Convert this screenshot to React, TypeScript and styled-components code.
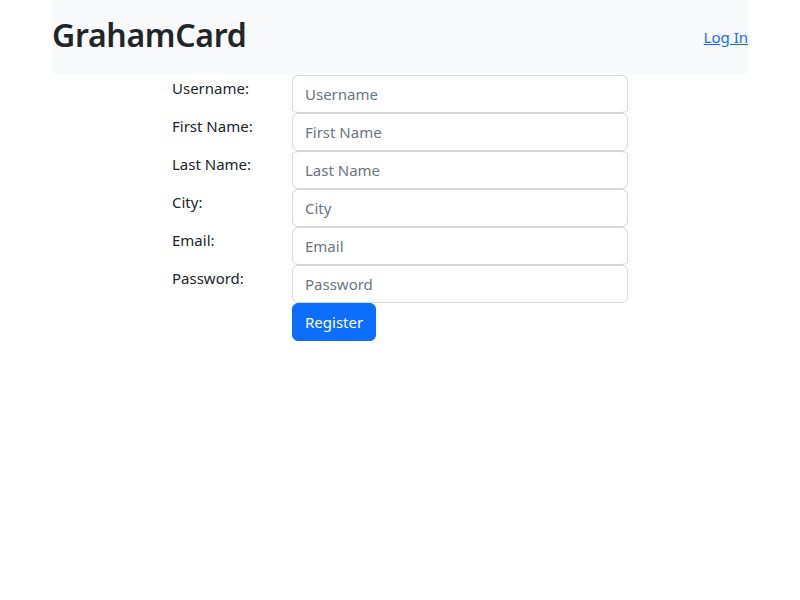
import React from "react";
import styled, { createGlobalStyle } from "styled-components";

const Global = createGlobalStyle`
  * { box-sizing: border-box; }
  body {
    margin: 0;
    background: #fff;
    color: #212529;
    font-family: "Noto Sans", "Open Sans", sans-serif;
    font-size: 16px;
    line-height: 1.5;
  }
`;

const Container = styled.div`
  width: 696px;
  margin: 0 auto;
`;

const Header = styled.header`
  height: 74px;
  background: #f8f9fa;
  display: flex;
  align-items: center;
  justify-content: space-between;
`;

const Brand = styled.h1`
  margin: 0 0 3px;
  font-size: 32px;
  font-weight: 600;
  line-height: 1.2;
  color: #212529;
  letter-spacing: -0.3px;
`;

const NavLink = styled.a`
  color: #0d6efd;
  text-decoration: underline;
  font-size: 15px;
  margin-top: 1px;
`;

const Form = styled.form`
  width: 456px;
  margin: 1px auto 0;
  display: grid;
  grid-template-columns: 120px 336px;
`;

const Label = styled.label`
  padding-top: 1px;
  font-size: 15px;
  line-height: 24px;
`;

const Input = styled.input`
  display: block;
  width: 100%;
  height: 38px;
  padding: 6px 12px;
  font-family: inherit;
  font-size: 15px;
  color: #212529;
  background: #fff;
  border: 1px solid #d3d6da;
  border-radius: 6px;
  outline: none;
  &::placeholder { color: #6c757d; }
`;

const Button = styled.button`
  grid-column: 2;
  justify-self: start;
  height: 38px;
  padding: 6px 12px;
  font-family: inherit;
  font-size: 15px;
  color: #fff;
  background: #0d6efd;
  border: 1px solid #0d6efd;
  border-radius: 6px;
`;

const fields = [
  { id: "username", label: "Username:", type: "text", ph: "Username" },
  { id: "firstName", label: "First Name:", type: "text", ph: "First Name" },
  { id: "lastName", label: "Last Name:", type: "text", ph: "Last Name" },
  { id: "city", label: "City:", type: "text", ph: "City" },
  { id: "email", label: "Email:", type: "email", ph: "Email" },
  { id: "password", label: "Password:", type: "password", ph: "Password" },
];

export default function App() {
  return (
    <>
      <Global />
      <Container>
        <Header>
          <Brand>GrahamCard</Brand>
          <NavLink href="#">Log In</NavLink>
        </Header>
        <Form onSubmit={(e) => e.preventDefault()}>
          {fields.map((f) => (
            <React.Fragment key={f.id}>
              <Label htmlFor={f.id}>{f.label}</Label>
              <Input id={f.id} type={f.type} placeholder={f.ph} />
            </React.Fragment>
          ))}
          <Button type="submit">Register</Button>
        </Form>
      </Container>
    </>
  );
}
